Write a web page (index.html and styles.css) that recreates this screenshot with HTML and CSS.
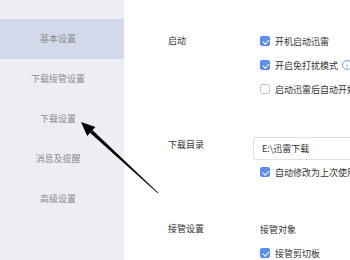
FILE: index.html
```html
<!doctype html>
<html lang="zh-CN">
<head>
    <meta charset="UTF-8">
    <title>设置</title>
    <link rel="stylesheet" href="styles.css">
</head>
<body>
    <div id="app">
        <ul id="nav">
            <li class="selected">基本设置</li>
            <li>下载接管设置</li>
            <li>下载设置</li>
            <li>消息及提醒</li>
            <li>高级设置</li>
        </ul>
        <div id="main">
            <div class="section s-start">
                <div class="label">启动</div>
                <div class="opts">
                    <div class="opt"><span class="box on"></span>开机启动迅雷</div>
                    <div class="opt"><span class="box on"></span>开启免打扰模式<span class="info">i</span></div>
                    <div class="opt"><span class="box"></span>启动迅雷后自动开始未完成的任务</div>
                </div>
            </div>
            <div class="section s-dir">
                <div class="label">下载目录</div>
                <div class="opts">
                    <div class="input">E:\迅雷下载</div>
                    <div class="opt"><span class="box on"></span>自动修改为上次使用的目录</div>
                </div>
            </div>
            <div class="section s-take">
                <div class="label">接管设置</div>
                <div class="opts">
                    <div class="opt plain">接管对象</div>
                    <div class="opt"><span class="box on"></span>接管剪切板</div>
                </div>
            </div>
        </div>
        <svg id="arrow" width="350" height="260" viewBox="0 0 350 260">
            <polygon points="81,122 95.4,127.1 87.2,135.9" fill="#000"/>
            <polygon points="92.6,130.2 158.3,192.7 157.7,193.3 90.0,132.8" fill="#000"/>
        </svg>
    </div>
</body>
</html>
```

FILE: styles.css
```css
*{
    margin: 0;
    padding: 0;
}
ul{
    list-style: none;
}
body{
    background: #fff;
    font-family: "Noto Sans CJK SC", "Noto Sans", sans-serif;
    font-size: 9px;
    color: #333;
}
#app{
    width: 350px;
    height: 260px;
    display: flex;
    position: relative;
    overflow: hidden;
}
/*** 左侧导航 ***/
#nav{
    width: 124px;
    flex-shrink: 0;
    background: #eceef3;
    padding-top: 19px;
}
#nav li{
    height: 40px;
    line-height: 40px;
    text-align: center;
    color: #8c8c8c;
    padding-right: 8px;
}
#nav .selected{
    background: #d3d9eb;
}
/*** 右侧内容 ***/
#main{
    flex: 1;
    padding-left: 44px;
    padding-top: 29px;
}
.section{
    display: flex;
}
.label{
    width: 85px;
    flex-shrink: 0;
    line-height: 24px;
    color: #333;
}
.opts{
    flex: 1;
    white-space: nowrap;
}
.opt{
    height: 24px;
    display: flex;
    align-items: center;
    padding-left: 7px;
}
.box{
    width: 10px;
    height: 10px;
    border: 1px solid #c8c8c8;
    border-radius: 2px;
    margin-right: 5px;
    box-sizing: border-box;
    position: relative;
    background: #fff;
}
.box.on{
    background: #5b8ef0;
    border-color: #5b8ef0;
}
.box.on::after{
    content: "";
    position: absolute;
    left: 2.5px;
    top: 0.5px;
    width: 2.5px;
    height: 5px;
    border: solid #fff;
    border-width: 0 1.3px 1.3px 0;
    transform: rotate(45deg);
}
.info{
    width: 8px;
    height: 8px;
    border: 1px solid #6f9cf2;
    border-radius: 50%;
    color: #6f9cf2;
    font-size: 7px;
    line-height: 8px;
    text-align: center;
    margin-left: 4px;
}
.s-dir{
    margin-top: 36px;
}
.s-dir .label{
    line-height: 16px;
}
.input{
    height: 23px;
    box-sizing: border-box;
    border: 1px solid #e2e2e2;
    border-right: 0;
    border-radius: 2px 0 0 2px;
    line-height: 21px;
    padding-left: 8px;
    color: #333;
}
.s-take{
    margin-top: 33px;
}
#arrow{
    position: absolute;
    left: 0;
    top: 0;
}
```
